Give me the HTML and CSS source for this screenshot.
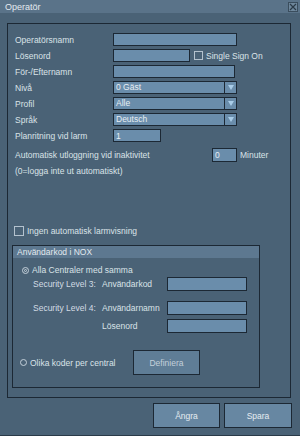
FILE: index.html
```html
<!DOCTYPE html>
<html lang="sv">
<head>
    <meta charset="UTF-8">
    <title>Operatör</title>
    <link rel="stylesheet" href="styles.css">
</head>
<body>
    <div class="window">
        <div class="titlebar">
            <span>Operatör</span>
            <span class="close-btn">
                <svg width="8" height="8" viewBox="0 0 8 8"><path d="M1 1L7 7M7 1L1 7" stroke="#2b3a47" stroke-width="1.2"/></svg>
            </span>
        </div>

        <div class="frame">
            <div class="form">
                <div class="row">
                    <span class="label">Operatörsnamn</span>
                    <span class="input w-long"></span>
                </div>
                <div class="row">
                    <span class="label">Lösenord</span>
                    <span class="input w-pass"></span>
                    <span class="check check-sso"></span>
                    <span class="check-text">Single Sign On</span>
                </div>
                <div class="row">
                    <span class="label">För-/Efternamn</span>
                    <span class="input w-name"></span>
                </div>
                <div class="row">
                    <span class="label">Nivå</span>
                    <span class="select"><span class="value">0 Gäst</span><span class="arrow"></span></span>
                </div>
                <div class="row">
                    <span class="label">Profil</span>
                    <span class="select"><span class="value">Alle</span><span class="arrow"></span></span>
                </div>
                <div class="row">
                    <span class="label">Språk</span>
                    <span class="select"><span class="value">Deutsch</span><span class="arrow"></span></span>
                </div>
                <div class="row">
                    <span class="label">Planritning vid larm</span>
                    <span class="input w-short">1</span>
                </div>

                <div class="row row-auto">
                    <span class="label label-auto">Automatisk utloggning vid inaktivitet</span>
                    <span class="input w-min">0</span>
                    <span class="unit">Minuter</span>
                </div>
                <div class="note">(0=logga inte ut automatiskt)</div>
            </div>

            <div class="row row-alarm">
                <span class="check"></span>
                <span class="check-text">Ingen automatisk larmvisning</span>
            </div>

            <div class="group">
                <div class="group-head">Användarkod i NOX</div>
                <div class="radio-row">
                    <span class="radio selected"></span>
                    <span>Alla Centraler med samma</span>
                </div>
                <div class="sec-row first">
                    <span class="sec-level">Security Level 3:</span>
                    <span class="sec-label">Användarkod</span>
                    <span class="input w-code"></span>
                </div>
                <div class="sec-row second">
                    <span class="sec-level">Security Level 4:</span>
                    <span class="sec-label">Användarnamn</span>
                    <span class="input w-code"></span>
                </div>
                <div class="sec-row third">
                    <span class="sec-level"></span>
                    <span class="sec-label">Lösenord</span>
                    <span class="input w-code"></span>
                </div>
                <div class="radio-row radio-other">
                    <span class="radio"></span>
                    <span class="radio-text">Olika koder per central</span>
                    <span class="btn btn-define">Definiera</span>
                </div>
            </div>
        </div>

        <div class="actions">
            <span class="btn btn-main">Ångra</span>
            <span class="btn btn-main btn-save">Spara</span>
        </div>
    </div>
</body>
</html>
```

FILE: styles.css
```css
body {
    margin: 0;
    font-family: "Liberation Sans", Arial, sans-serif;
    font-size: 8.5px;
    color: #dae2e8;
    background-color: #4a6276;
}
.window {
    width: 300px;
    height: 436px;
    box-sizing: border-box;
    background-color: #4a6276;
    border-bottom: 1px solid #2a3a48;
}
.titlebar {
    height: 13px;
    display: flex;
    align-items: center;
    justify-content: space-between;
    padding-left: 5px;
    padding-right: 2px;
    background-color: #5a7389;
    color: #e4eaef;
    font-size: 9px;
}
.close-btn {
    width: 10px;
    height: 10px;
    box-sizing: border-box;
    border: 1px solid #3a4d5d;
    background-color: #6e879c;
    display: flex;
    align-items: center;
    justify-content: center;
}
.close-btn svg {
    display: block;
}

.frame {
    margin: 10px 0 0 7px;
    width: 284px;
    height: 375px;
    box-sizing: border-box;
    border: 1px solid #1c2834;
}
.form {
    padding: 9px 0 0 7px;
}
.row {
    display: flex;
    align-items: center;
    height: 13px;
    margin-bottom: 3px;
}
.label {
    width: 98px;
    flex-shrink: 0;
}
.input {
    display: flex;
    align-items: center;
    height: 13px;
    box-sizing: border-box;
    padding-left: 2px;
    border: 1px solid #1c2834;
    background-color: #6a8dab;
    color: #e8eef3;
}
.w-long { width: 124px; }
.w-pass { width: 77px; }
.w-name { width: 122px; }
.w-short { width: 48px; }
.w-min { width: 25px; height: 14px; }
.w-code { width: 80px; height: 14px; }

.check {
    width: 9px;
    height: 9px;
    box-sizing: border-box;
    border: 1px solid #b4c2ce;
    flex-shrink: 0;
}
.check-sso {
    margin-left: 4px;
}
.check-text {
    margin-left: 3px;
}

.select {
    display: flex;
    width: 124px;
    height: 13px;
    box-sizing: border-box;
    border: 1px solid #1c2834;
    background-color: #6a8dab;
}
.select .value {
    flex: 1;
    padding-left: 2px;
    line-height: 11px;
    border-right: 1px solid #1c2834;
    color: #e8eef3;
}
.select .arrow {
    width: 11px;
    display: flex;
    align-items: center;
    justify-content: center;
}
.select .arrow::after {
    content: "";
    border-left: 3.5px solid transparent;
    border-right: 3.5px solid transparent;
    border-top: 5px solid #a9cde9;
}

.row-auto {
    margin-top: 6px;
    height: 14px;
    margin-bottom: 0;
}
.label-auto {
    width: 197px;
}
.unit {
    margin-left: 3px;
}
.note {
    margin-top: 3px;
    height: 12px;
    line-height: 12px;
}

.row-alarm {
    margin: 49px 0 0 6px;
    height: 10px;
}
.row-alarm .check {
    width: 10px;
    height: 10px;
}

.group {
    margin: 9px 0 0 4px;
    width: 248px;
    height: 143px;
    box-sizing: border-box;
    border: 1px solid #1c2834;
}
.group-head {
    height: 12px;
    line-height: 12px;
    padding-left: 4px;
    background-color: #5d7890;
    color: #e2e9ee;
}
.radio-row {
    display: flex;
    align-items: center;
    height: 12px;
    margin-top: 6px;
    padding-left: 9px;
}
.radio {
    width: 7px;
    height: 7px;
    box-sizing: border-box;
    border: 1px solid #c4d0da;
    border-radius: 50%;
    margin-right: 3px;
    display: flex;
    align-items: center;
    justify-content: center;
}
.radio.selected::after {
    content: "";
    width: 3px;
    height: 3px;
    border-radius: 50%;
    border: 1px solid #c4d0da;
    box-sizing: border-box;
}
.sec-row {
    display: flex;
    align-items: center;
    height: 14px;
    padding-left: 20px;
}
.sec-row.first { margin-top: 1px; }
.sec-row.second { margin-top: 10px; }
.sec-row.third { margin-top: 4px; }
.sec-level {
    width: 69px;
    color: #d3dce4;
}
.sec-label {
    width: 65px;
}
.radio-other {
    height: 25px;
    margin-top: 17px;
    padding-left: 7px;
}
.radio-text {
    width: 103px;
}
.btn {
    display: flex;
    align-items: center;
    justify-content: center;
    box-sizing: border-box;
    border: 1px solid #1c2834;
    background-color: #5f7d96;
}
.btn-define {
    width: 67px;
    height: 25px;
    color: #c3d0db;
}
.actions {
    display: flex;
    justify-content: flex-end;
    gap: 4px;
    margin: 5px 8px 0 0;
}
.btn-main {
    width: 67px;
    height: 25px;
    background-color: #6787a2;
    color: #e6ecf1;
}
.btn-save {
    width: 68px;
}
```
